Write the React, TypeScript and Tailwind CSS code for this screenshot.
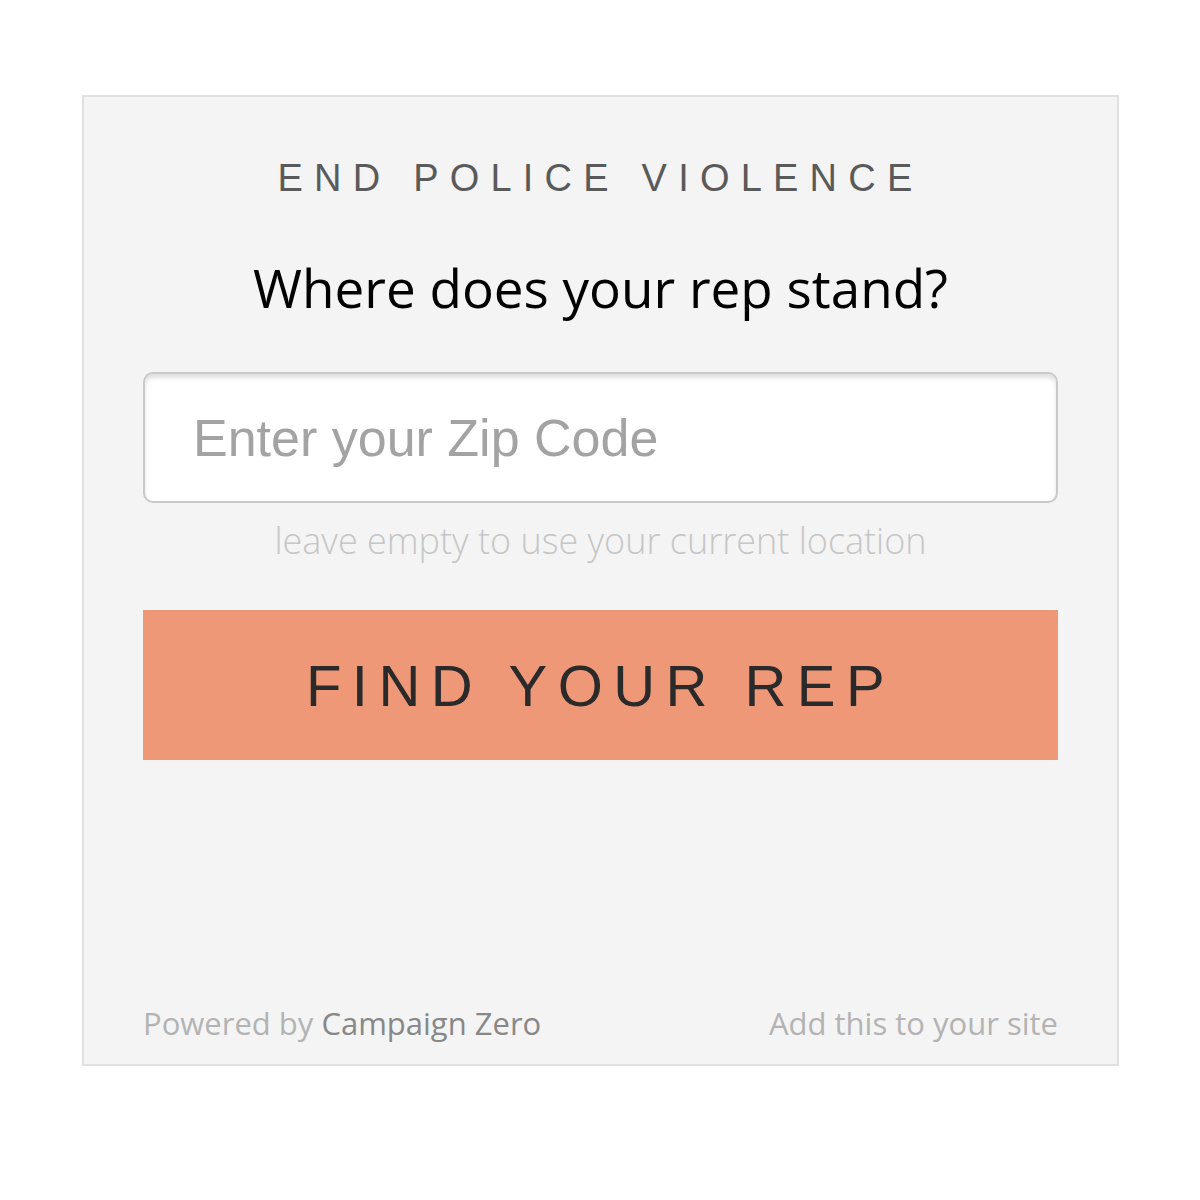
export default function App() {
  return (
    <div className="w-[1200px] h-[1200px] bg-white pt-[95px] pl-[82px]">
      <div className="w-[1037px] h-[971px] bg-[#f4f4f4] border-2 border-[#e0e0e0] flex flex-col px-[59px] pt-[57px] pb-[21px] font-['Open_Sans',sans-serif]">
        {/* Eyebrow */}
        <div className="text-center text-[#5a5a5a] text-[38px] leading-[48px] tracking-[0.295em] font-['Liberation_Sans',Arial,sans-serif]">
          END POLICE VIOLENCE
        </div>

        <h1 className="text-center text-black text-[53px] leading-[64px] mt-[54px]">
          Where does your rep stand?
        </h1>

        {/* Zip input */}
        <input
          type="text"
          placeholder="Enter your Zip Code"
          className="mt-[52px] h-[131px] w-full shrink-0 bg-white border-2 border-[#c9c9c9] rounded-[10px] pl-[48px] text-[52px] placeholder:text-[#a3a3a3] shadow-[inset_0_4px_4px_rgba(0,0,0,0.12)] outline-none font-['Liberation_Sans',Arial,sans-serif]"
        />

        <p className="text-center text-[#c6c6c6] text-[36px] leading-[44px] mt-[16px] font-light">
          leave empty to use your current location
        </p>

        <button className="mt-[47px] h-[150px] w-full shrink-0 bg-[#ef9878] text-[#2a2a2a] text-[58px] tracking-[0.18em] font-['Liberation_Sans',Arial,sans-serif]">
          FIND YOUR REP
        </button>

        {/* Footer */}
        <div className="mt-auto flex justify-between items-center text-[31px] leading-[40px]">
          <span className="text-[#b3b3b3]">
            Powered by <span className="text-[#888]">Campaign Zero</span>
          </span>
          <span className="text-[#b3b3b3]">Add this to your site</span>
        </div>
      </div>
    </div>
  );
}
